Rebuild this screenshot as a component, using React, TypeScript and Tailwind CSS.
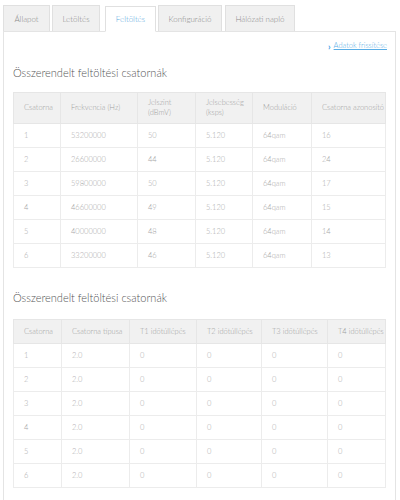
import React from "react";

const tabs = [
  { label: "Állapot", w: "w-[47px]", ml: "ml-[3px]" },
  { label: "Letöltés", w: "w-[48px]", ml: "ml-[2px]" },
  { label: "Feltöltés", w: "w-[51px]", ml: "ml-[5px]", active: true },
  { label: "Konfiguráció", w: "w-[64px]", ml: "ml-[2px]" },
  { label: "Hálózati napló", w: "w-[70px]", ml: "ml-[3px]" },
];

const upstream = [
  ["1", "53200000", "50", "5.120", "64qam", "16"],
  ["2", "26600000", "44", "5.120", "64qam", "24"],
  ["3", "59800000", "50", "5.120", "64qam", "17"],
  ["4", "46600000", "49", "5.120", "64qam", "15"],
  ["5", "40000000", "48", "5.120", "64qam", "14"],
  ["6", "33200000", "46", "5.120", "64qam", "13"],
];

const timeouts = [1, 2, 3, 4, 5, 6].map((n) => [String(n), "2.0", "0", "0", "0", "0"]);

type TableProps = {
  widths: string[];
  head: React.ReactNode[];
  rows: string[][];
  headH: string;
};

const DataTable: React.FC<TableProps> = ({ widths, head, rows, headH }) => (
  <table className="table-fixed border-collapse w-[372px] text-[7.5px] leading-[10px]">
    <colgroup>
      {widths.map((w, i) => (
        <col key={i} className={w} />
      ))}
    </colgroup>
    <thead>
      <tr className={`${headH} bg-[#f1f1f1]`}>
        {head.map((h, i) => (
          <th key={i} className="border border-[#e6e6e6] pl-[10px] text-left font-light text-[#9e9e9e] align-middle">
            {h}
          </th>
        ))}
      </tr>
    </thead>
    <tbody>
      {rows.map((r, i) => (
        <tr key={i} className="h-[24px]">
          {r.map((c, j) => (
            <td key={j} className="border border-[#ececec] pl-[10px] text-[#a8a8a8] align-middle">
              {c}
            </td>
          ))}
        </tr>
      ))}
    </tbody>
  </table>
);

export default function App() {
  return (
    <div className="w-[400px] h-[500px] overflow-hidden bg-white font-['Lato',sans-serif] font-light">
      {/* fülek */}
      <div className="flex items-end h-[31px] pt-[6px]">
        {tabs.map((t) => (
          <div
            key={t.label}
            className={`${t.w} ${t.ml} h-[26px] flex items-center justify-center text-[8px] border border-[#e0e0e0] ${
              t.active
                ? "bg-white text-[#5aa8e0] border-b-white relative z-10 mb-[-1px]"
                : "bg-[#f0f0f0] text-[#8a8a8a] border-b-0"
            }`}
          >
            {t.label}
          </div>
        ))}
      </div>

      {/* panel */}
      <div className="ml-[3px] w-[393px] h-[480px] border border-[#e4e4e4] border-b-0">
        <div className="flex justify-end items-center pr-[8px] pt-[8px] h-[20px]">
          <span className="text-[#3aa0e6] text-[9px] font-bold mr-[3px] leading-none">›</span>
          <a className="text-[#5aaee6] text-[7.5px] underline">Adatok frissítése</a>
        </div>

        <h2 className="pl-[9px] mt-[14px] text-[11px] text-[#555] leading-[14px]">
          Összerendelt feltöltési csatornák
        </h2>
        <div className="pl-[9px] mt-[12px]">
          <DataTable
            widths={["w-[47px]", "w-[77px]", "w-[58px]", "w-[57px]", "w-[59px]", "w-[74px]"]}
            headH="h-[31px]"
            head={[
              "Csatorna",
              "Frekvencia (Hz)",
              <>Jelszint<br />(dBmV)</>,
              <>Jelsebesség<br />(ksps)</>,
              "Moduláció",
              "Csatorna azonosító",
            ]}
            rows={upstream}
          />
        </div>

        <h2 className="pl-[9px] mt-[23px] text-[11px] text-[#555] leading-[14px]">
          Összerendelt feltöltési csatornák
        </h2>
        <div className="pl-[9px] mt-[14px]">
          <DataTable
            widths={["w-[48px]", "w-[68px]", "w-[67px]", "w-[65px]", "w-[66px]", "w-[58px]"]}
            headH="h-[24px]"
            head={["Csatorna", "Csatorna típusa", "T1 időtúllépés", "T2 időtúllépés", "T3 időtúllépés", "T4 időtúllépés"]}
            rows={timeouts}
          />
        </div>
      </div>
    </div>
  );
}
